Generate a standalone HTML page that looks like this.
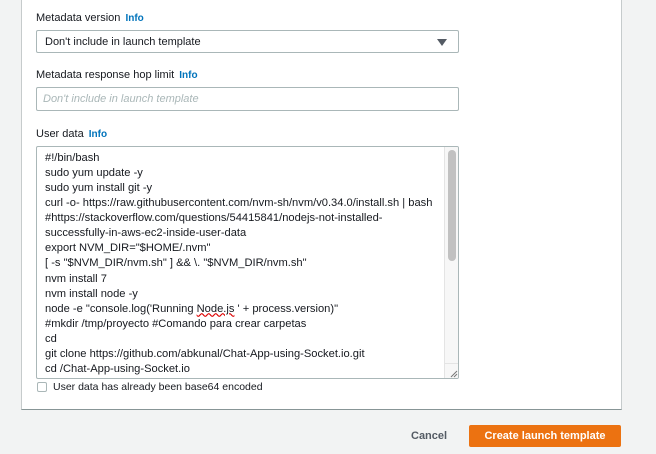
<!DOCTYPE html>
<html><head><meta charset="utf-8"><style>
*{box-sizing:border-box;margin:0;padding:0}
body{width:656px;height:454px;background:#f2f3f3;font-family:"Liberation Sans",Arial,sans-serif;position:relative;overflow:hidden;color:#16191f}
.panel{position:absolute;left:21px;top:-2px;width:601px;height:412px;background:#fff;border:1px solid #c6cbcc;border-bottom-color:#879596;border-top:none}
.lbl{position:absolute;left:36px;font-size:11px;color:#16191f}
.lbl b{color:#0073bb;font-size:10px;font-weight:bold;margin-left:2px}
.box{position:absolute;left:36px;width:423px;border:1px solid #aab7b8;border-radius:2px;background:#fff;font-size:11px}
.ta{position:absolute;left:36px;top:146px;width:423px;height:233px;border:1px solid #aab7b8;border-radius:2px;background:#fff;overflow:hidden}
.ta pre{position:absolute;left:8px;top:4px;font-family:"Liberation Sans",Arial,sans-serif;font-size:11.15px;line-height:15.07px;color:#16191f;white-space:pre}
.sb{position:absolute;right:0;top:0;width:14px;height:100%;background:#f7f7f7;border-left:1px solid #e4e4e4}
.thumb{position:absolute;left:3px;top:3px;width:8px;height:111px;background:#c1c1c1;border-radius:4px}
</style></head><body>
<div class="panel"></div>
<div class="lbl" style="top:12px">Metadata version <b>Info</b></div>
<div class="box" style="top:30px;height:23px;padding:5px 0 0 8px">Don't include in launch template
<div style="position:absolute;right:11px;top:8px;width:0;height:0;border-left:5px solid transparent;border-right:5px solid transparent;border-top:7px solid #545b64"></div></div>
<div class="lbl" style="top:69px">Metadata response hop limit <b>Info</b></div>
<div class="box" style="top:87px;height:24px;padding:5px 0 0 6px;color:#aab7b8;font-style:italic;font-size:11px">Don't include in launch template</div>
<div class="lbl" style="top:128px">User data <b>Info</b></div>
<div class="ta"><pre>#!/bin/bash
sudo yum update -y
sudo yum install git -y
curl -o- https://raw.githubusercontent.com/nvm-sh/nvm/v0.34.0/install.sh | bash
#https://stackoverflow.com/questions/54415841/nodejs-not-installed-
successfully-in-aws-ec2-inside-user-data
export NVM_DIR="$HOME/.nvm"
[ -s "$NVM_DIR/nvm.sh" ] &amp;&amp; \. "$NVM_DIR/nvm.sh"
nvm install 7
nvm install node -y
node -e "console.log('Running <u style="text-decoration-color:#d00;text-decoration-style:wavy">Node.js</u> ' + process.version)"
#mkdir /tmp/proyecto #Comando para crear carpetas
cd
git clone https://github.com/abkunal/Chat-App-using-Socket.io.git
cd /Chat-App-using-Socket.io</pre>
<div class="sb"><div class="thumb"></div>
<div style="position:absolute;left:0;bottom:0;width:14px;height:15px;border-top:1px solid #e4e4e4;background:#f7f7f7"><svg width="14" height="15" viewBox="0 0 14 15"><path d="M6 13L12 7M9 13L12 10" stroke="#777" stroke-width="1"/></svg></div></div>
</div>
<div style="position:absolute;left:37px;top:382px;width:10px;height:10px;border:1px solid #aab7b8;border-radius:2px;background:#fff"></div>
<div class="lbl" style="top:381px;left:53px;font-size:10.5px">User data has already been base64 encoded</div>
<div style="position:absolute;left:411px;top:430px;font-size:11px;font-weight:bold;color:#545b64">Cancel</div>
<div style="position:absolute;left:469px;top:425px;width:152px;height:22px;background:#ec7211;border-radius:2px;color:#fff;font-size:11px;font-weight:bold;text-align:center;line-height:22px">Create launch template</div>
</body></html>
